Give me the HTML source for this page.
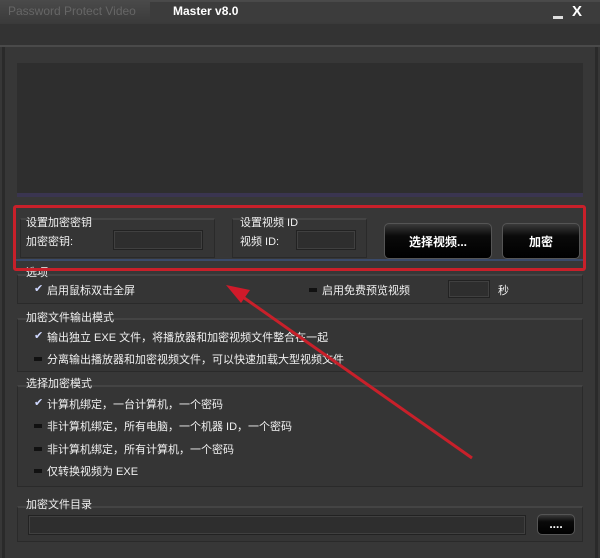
<!DOCTYPE html>
<html><head><meta charset="utf-8"><style>
*{margin:0;padding:0;box-sizing:border-box}
body{width:600px;height:558px;background:#373737;position:relative;overflow:hidden;font-family:"Liberation Sans","Noto Sans CJK SC",sans-serif;font-size:11px;color:#f0f0f0}
.a{position:absolute;white-space:nowrap}
.grp{position:absolute;border:1px solid #2a2a2a;border-top:2px solid #444;background:#353535}
.inp{position:absolute;background:#2e2e2e;border:1px solid #222;box-shadow:inset 0 0 0 1px #404040}
.btn{position:absolute;background:linear-gradient(#3a3a3a,#0a0a0a 35%,#000);border:1px solid #555;border-radius:5px;color:#fff;font-weight:bold;text-align:center;font-size:12px}
.cb{position:absolute;width:10px;height:10px;font-size:11px;line-height:10px;color:#cfd8ff}
.cb.off{background:#111;height:4px;margin-top:4px;width:8px}
</style></head><body>
<div class="a" style="left:0;top:0;width:600px;height:24px;background:linear-gradient(#4a4a4a,#3a3a3a)"></div>
<div class="a" style="left:8px;top:4px;color:#666;font-size:12px">Password Protect Video</div>
<div class="a" style="left:150px;top:2px;width:450px;height:20px;background:#3c3c3c"></div>
<div class="a" style="left:173px;top:4px;font-weight:bold;color:#fff;font-size:12px">Master v8.0</div>
<div class="a" style="left:572px;top:3px;font-size:15px;color:#fff;font-weight:bold">X</div>
<div class="a" style="left:553px;top:16px;width:10px;height:3px;background:#ddd"></div>
<div class="a" style="left:0;top:24px;width:600px;height:22px;background:#333"></div>
<div class="a" style="left:0;top:45px;width:600px;height:2px;background:#4a4a4a"></div>
<div class="a" style="left:2px;top:47px;width:3px;height:511px;background:#2a2a2a"></div>
<div class="a" style="left:595px;top:47px;width:3px;height:511px;background:#2a2a2a"></div>
<div class="a" style="left:17px;top:63px;width:566px;height:134px;background:#2e2e2e"></div>
<div class="a" style="left:17px;top:193px;width:566px;height:4px;background:#3a3550"></div>

<div class="grp" style="left:20px;top:218px;width:195px;height:40px"></div>
<div class="grp" style="left:232px;top:218px;width:135px;height:40px"></div>
<div class="a" style="left:26px;top:214px">设置加密密钥</div>
<div class="a" style="left:26px;top:233px">加密密钥:</div>
<div class="inp" style="left:113px;top:230px;width:90px;height:20px"></div>
<div class="a" style="left:240px;top:214px">设置视频 ID</div>
<div class="a" style="left:240px;top:233px">视频 ID:</div>
<div class="inp" style="left:296px;top:230px;width:60px;height:20px"></div>
<div class="btn" style="left:384px;top:223px;width:108px;height:36px;line-height:36px">选择视频...</div>
<div class="btn" style="left:502px;top:223px;width:78px;height:36px;line-height:36px">加密</div>
<div class="a" style="left:14px;top:259px;width:570px;height:2px;background:#3a4a6a"></div>

<div class="grp" style="left:17px;top:274px;width:566px;height:30px"></div>
<div class="a" style="left:26px;top:264px">选项</div>
<div class="cb" style="left:34px;top:284px">✔</div>
<div class="a" style="left:47px;top:282px">启用鼠标双击全屏</div>
<div class="cb off" style="left:309px;top:284px"></div>
<div class="a" style="left:322px;top:282px">启用免费预览视频</div>
<div class="inp" style="left:448px;top:280px;width:42px;height:18px"></div>
<div class="a" style="left:498px;top:282px">秒</div>

<div class="grp" style="left:17px;top:318px;width:566px;height:54px"></div>
<div class="a" style="left:26px;top:309px">加密文件输出模式</div>
<div class="cb" style="left:34px;top:331px">✔</div>
<div class="a" style="left:47px;top:329px">输出独立 EXE 文件，将播放器和加密视频文件整合在一起</div>
<div class="cb off" style="left:34px;top:353px"></div>
<div class="a" style="left:47px;top:351px">分离输出播放器和加密视频文件，可以快速加载大型视频文件</div>

<div class="grp" style="left:17px;top:385px;width:566px;height:102px"></div>
<div class="a" style="left:26px;top:375px">选择加密模式</div>
<div class="cb" style="left:34px;top:398px">✔</div>
<div class="a" style="left:47px;top:396px">计算机绑定，一台计算机，一个密码</div>
<div class="cb off" style="left:34px;top:420px"></div>
<div class="a" style="left:47px;top:418px">非计算机绑定，所有电脑，一个机器 ID，一个密码</div>
<div class="cb off" style="left:34px;top:443px"></div>
<div class="a" style="left:47px;top:441px">非计算机绑定，所有计算机，一个密码</div>
<div class="cb off" style="left:34px;top:465px"></div>
<div class="a" style="left:47px;top:463px">仅转换视频为 EXE</div>

<div class="grp" style="left:17px;top:506px;width:566px;height:36px"></div>
<div class="a" style="left:26px;top:496px">加密文件目录</div>
<div class="inp" style="left:28px;top:515px;width:498px;height:20px"></div>
<div class="btn" style="left:537px;top:514px;width:38px;height:21px;line-height:18px;font-size:12px">....</div>

<div class="a" style="left:13px;top:205px;width:573px;height:66px;border:3px solid #c8202a;border-radius:3px"></div>
<svg class="a" style="left:0;top:0" width="600" height="558">
<line x1="472" y1="458" x2="240" y2="295" stroke="#c8202a" stroke-width="3"/>
<polygon points="226,285 250,290 241,303" fill="#d01a2a"/>
</svg>
</body></html>
